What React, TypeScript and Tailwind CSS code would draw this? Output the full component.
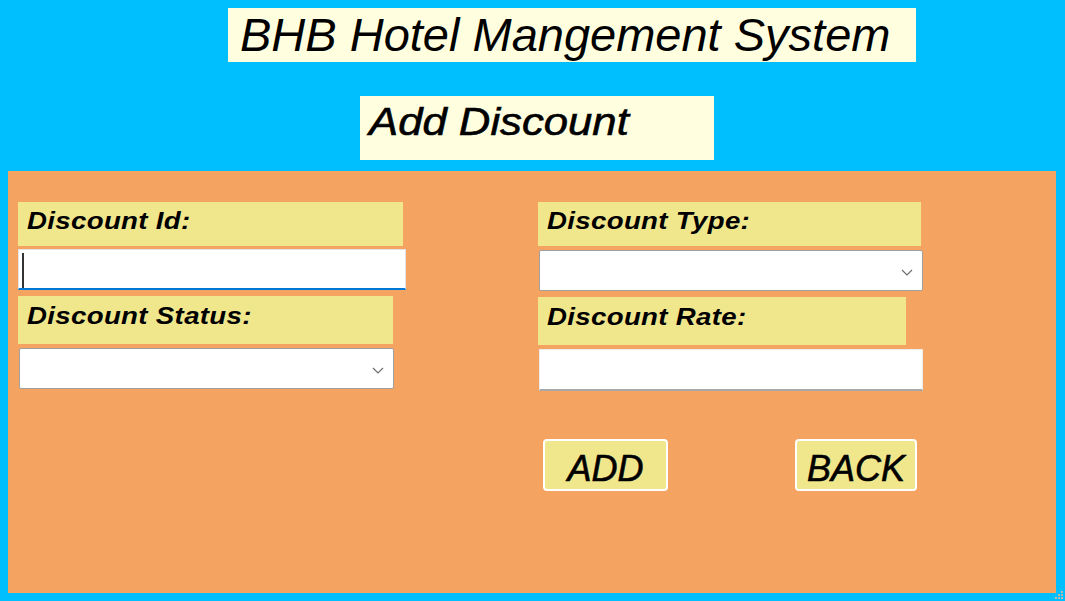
import React from "react";

const Chevron = () => (
  <svg width="12" height="7" viewBox="0 0 12 7" className="absolute right-[9px] top-[18px]">
    <path d="M1 1 L6 6 L11 1" fill="none" stroke="#6d6d6d" strokeWidth="1.2" />
  </svg>
);

const Label = ({ text, w, h, pt }: { text: string; w: string; h: string; pt: string }) => (
  <div className={`bg-[#F0E68C] ${w} ${h} ${pt} pl-[9px] text-[24px] leading-[25px] font-bold italic text-black whitespace-nowrap`}>
    <span className="inline-block origin-left scale-x-[1.15] tracking-[0.3px]">{text}</span>
  </div>
);

export default function App() {
  return (
    <div
      className="w-[1065px] h-[601px] bg-[#00BFFF] flex flex-col relative overflow-hidden"
      style={{ fontFamily: '"Liberation Sans", Arial, sans-serif' }}
    >
      <div className="ml-[228px] mt-[8px] w-[688px] h-[54px] bg-[#FFFFE0] pl-[12px] text-[47px] leading-[54px] italic text-black whitespace-nowrap">
        BHB Hotel Mangement System
      </div>
      <div className="ml-[360px] mt-[34px] w-[354px] h-[64px] bg-[#FFFFE0] pl-[9px] pt-[6px] text-[39px] leading-[40px] italic text-black whitespace-nowrap">
        <span className="inline-block origin-left scale-x-[1.12] [-webkit-text-stroke:0.6px_black]">Add Discount</span>
      </div>
      <div className="ml-[8px] mt-[11px] w-[1048px] h-[422px] bg-[#F4A460] pt-[31px] flex">
        <div className="ml-[10px] w-[388px] flex flex-col">
          <Label text="Discount Id:" w="w-[385px]" h="h-[44px]" pt="pt-[6px]" />
          <div className="mt-[3px] w-[388px] h-[41px] bg-white border border-[#e3e3e3] border-b-2 border-b-[#0078d7] relative">
            <div className="absolute left-[3px] top-[3px] w-[2px] h-[35px] bg-[#333]" />
          </div>
          <div className="mt-[6px]">
            <Label text="Discount Status:" w="w-[375px]" h="h-[48px]" pt="pt-[7px]" />
          </div>
          <div className="mt-[4px] ml-[1px] w-[375px] h-[41px] bg-white border border-[#a0a0a0] rounded-[2px] relative">
            <Chevron />
          </div>
        </div>
        <div className="ml-[132px] w-[385px] flex flex-col">
          <Label text="Discount Type:" w="w-[383px]" h="h-[44px]" pt="pt-[6px]" />
          <div className="mt-[4px] ml-[1px] w-[384px] h-[41px] bg-white border border-[#a0a0a0] rounded-[2px] relative">
            <Chevron />
          </div>
          <div className="mt-[6px]">
            <Label text="Discount Rate:" w="w-[368px]" h="h-[48px]" pt="pt-[7px]" />
          </div>
          <div className="mt-[4px] ml-[1px] w-[384px] h-[42px] bg-white border border-[#ececec] border-b-2 border-b-[#a8a8a8]" />
          <div className="mt-[48px] flex">
            <button className="ml-[5px] w-[125px] h-[52px] bg-[#F0E68C] border-2 border-white rounded-[4px] pt-[6px] text-[36px] leading-[35px] italic text-black [-webkit-text-stroke:0.6px_black]">
              ADD
            </button>
            <button className="ml-[127px] w-[122px] h-[52px] bg-[#F0E68C] border-2 border-white rounded-[4px] pt-[6px] text-[36px] leading-[35px] italic text-black [-webkit-text-stroke:0.6px_black]">
              BACK
            </button>
          </div>
        </div>
      </div>
      <svg width="10" height="10" viewBox="0 0 10 10" className="absolute right-[1px] bottom-[1px]">
        <rect x="7" y="1" width="2" height="2" fill="#b8b8b8" />
        <rect x="4" y="4" width="2" height="2" fill="#b8b8b8" />
        <rect x="7" y="4" width="2" height="2" fill="#b8b8b8" />
        <rect x="1" y="7" width="2" height="2" fill="#b8b8b8" />
        <rect x="4" y="7" width="2" height="2" fill="#b8b8b8" />
        <rect x="7" y="7" width="2" height="2" fill="#b8b8b8" />
      </svg>
    </div>
  );
}
